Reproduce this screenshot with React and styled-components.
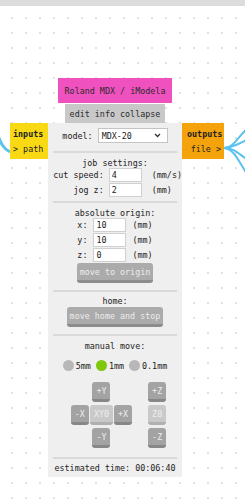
import React, {useState} from 'react';
import styled, {createGlobalStyle} from "styled-components";

const Global = createGlobalStyle`
  html, body {
    margin: 0;
    padding: 0;
  }
  body {
    width: 245px;
    height: 500px;
    overflow: hidden;
    font-family: "DejaVu Sans Mono", "Liberation Mono", monospace;
    font-size: 8.4px;
    color: #222;
    background-color: #fff;
    background-image: radial-gradient(circle, #c4c4c4 0.8px, rgba(255,255,255,0) 1.1px);
    background-size: 14px 15px;
    background-position: 5px 10.5px;
  }
`

const TopBar = styled.div`
  height: 6px;
  background: #dcdcdc;
`

const Canvas = styled.div`
  position: relative;
  height: 494px;
`

const Wires = styled.svg`
  position: absolute;
  left: 0;
  top: 0;
  width: 245px;
  height: 494px;
  pointer-events: none;
`

const Node = styled.div`
  position: absolute;
  left: 10px;
  top: 72px;
  display: grid;
  grid-template-columns: 38px 134px 42px;
  grid-template-rows: auto auto;
  align-items: start;
`

const Header = styled.div`
  grid-column: 2;
  grid-row: 1;
  display: flex;
  flex-direction: column;
  align-items: center;
  gap: 1px;
`

const Title = styled.div`
  width: 114px;
  height: 25px;
  display: flex;
  align-items: center;
  justify-content: center;
  background: #ef52be;
  color: #2a2a2a;
`

const EditBar = styled.div`
  width: 100px;
  height: 19px;
  display: flex;
  align-items: center;
  justify-content: center;
  background: #c8c8c8;
  color: #2a2a2a;
`

const Port = styled.div`
  grid-row: 2;
  grid-column: ${p => p.$right ? 3 : 1};
  height: 36px;
  display: flex;
  flex-direction: column;
  justify-content: center;
  gap: 5px;
  padding: 0 3px 0 ${p => p.$right ? '5px' : '3px'};
  background: ${p => p.$color};
  span { text-align: ${p => p.$right ? 'right' : 'left'}; }
  b { font-weight: bold; }
`

const Panel = styled.div`
  grid-row: 2;
  grid-column: 2;
  background: #efefef;
  padding: 5px 5px 4px;
  display: flex;
  flex-direction: column;
`

const Row = styled.div`
  display: flex;
  justify-content: center;
  align-items: center;
  gap: 5px;
  height: 15px;
`

const SelectBox = styled.div`
  position: relative;
  width: 70px;
  height: 15px;
  box-sizing: border-box;
  border: 1px solid #c4c4c4;
  background: #fff;
  padding-left: 3px;
  display: flex;
  align-items: center;
  svg {
    position: absolute;
    right: 6px;
    top: 4px;
  }
`

const Divider = styled.div`
  height: 2px;
  background: #dadada;
  margin: ${p => p.$m};
`

const Heading = styled.div`
  text-align: center;
  height: 10px;
  line-height: 10px;
  white-space: nowrap;
`

const FieldGrid = styled.div`
  display: grid;
  grid-template-columns: ${p => p.$cols};
  column-gap: ${p => p.$gap || '6px'};
  row-gap: 1px;
  justify-content: center;
  align-items: center;
  white-space: nowrap;
  span.label { text-align: right; }
`

const Field = styled.input`
  width: 33px;
  height: 14px;
  box-sizing: border-box;
  border: 1px solid #d0d0d0;
  background: #fff;
  font: inherit;
  color: #222;
  padding: 0 2px;
  outline: none;
`

const Button = styled.button`
  align-self: center;
  font: inherit;
  white-space: nowrap;
  height: 20px;
  padding: 0 3px;
  border: none;
  border-bottom: 3px solid #8c8c8c;
  border-radius: 3px;
  background: #ababab;
  color: #ececec;
  cursor: pointer;
  margin-top: 1px;
`

const RadioRow = styled.div`
  display: flex;
  justify-content: center;
  align-items: center;
  gap: 5px;
  margin-top: 9px;
  height: 11px;
  white-space: nowrap;
`

const Radio = styled.label`
  display: flex;
  align-items: center;
  gap: 2px;
  &::before {
    content: "";
    width: 11px;
    height: 11px;
    border-radius: 50%;
    background: ${p => p.$on ? '#7ec70d' : '#b8b8b8'};
  }
`

const Jog = styled.div`
  display: grid;
  grid-template-columns: auto auto auto 14px auto;
  grid-template-rows: 20px 20px 20px;
  column-gap: 1px;
  row-gap: 3px;
  justify-content: center;
  justify-items: center;
  margin: 11px 0 0 7px;
`

const JogButton = styled.button`
  font: inherit;
  white-space: nowrap;
  height: 20px;
  min-width: 17px;
  padding: 0 4px;
  border: none;
  border-bottom: 3px solid ${p => p.$light ? '#b0b0b0' : '#878787'};
  border-radius: 3px;
  background: ${p => p.$light ? '#c9c9c9' : '#a3a3a3'};
  color: #eee;
  grid-column: ${p => p.$col};
  grid-row: ${p => p.$row};
`

function App() {
  const [step, setStep] = useState('1mm');

  return (
    <>
      <Global />
      <TopBar />
      <Canvas>
        <Wires viewBox="0 0 245 494">
          <path d="M-10 112 C0 132 0 141 10 146" stroke="#5cc3ee" strokeWidth="3" fill="none" />
          <path d="M224 142 C234 142 238 130 250 120" stroke="#5cc3ee" strokeWidth="2" fill="none" />
          <path d="M224 142 C234 142 240 136 250 133" stroke="#5cc3ee" strokeWidth="2" fill="none" />
          <path d="M224 142 C236 142 240 150 250 155" stroke="#5cc3ee" strokeWidth="2" fill="none" />
          <path d="M224 142 C236 143 240 160 250 172" stroke="#5cc3ee" strokeWidth="2" fill="none" />
        </Wires>
        <Node>
          <Header>
            <Title>Roland MDX / iModela</Title>
            <EditBar>edit info collapse</EditBar>
          </Header>
          <Port $color="#f8d913">
            <b>inputs</b>
            <span>&gt; path</span>
          </Port>
          <Panel>
            <Row>
              <span>model:</span>
              <SelectBox>
                MDX-20
                <svg width="7" height="5" viewBox="0 0 7 5">
                  <path d="M1 1 L3.5 3.5 L6 1" stroke="#333" strokeWidth="1.3" fill="none" />
                </svg>
              </SelectBox>
            </Row>
            <Divider $m="8px 0 5px" />
            <Heading>job settings:</Heading>
            <FieldGrid $cols="auto 33px 30px" $gap="5px">
              <span className="label">cut speed:</span>
              <Field defaultValue="4" />
              <span>&nbsp;(mm/s)</span>
              <span className="label">jog z:</span>
              <Field defaultValue="2" />
              <span>&nbsp;(mm)</span>
            </FieldGrid>
            <Divider $m="4px 0 5px" />
            <Heading>absolute origin:</Heading>
            <FieldGrid $cols="auto 33px auto" $gap="6px">
              <span className="label">x:</span>
              <Field defaultValue="10" />
              <span>(mm)</span>
              <span className="label">y:</span>
              <Field defaultValue="10" />
              <span>(mm)</span>
              <span className="label">z:</span>
              <Field defaultValue="0" />
              <span>(mm)</span>
            </FieldGrid>
            <Button>move to origin</Button>
            <Divider $m="7px 0 4px" />
            <Heading>home:</Heading>
            <Button>move home and stop</Button>
            <Divider $m="7px 0 5px" />
            <Heading>manual move:</Heading>
            <RadioRow>
              {['5mm', '1mm', '0.1mm'].map(s => (
                <Radio key={s} $on={step === s} onClick={() => setStep(s)}>{s}</Radio>
              ))}
            </RadioRow>
            <Jog>
              <JogButton $col={2} $row={1}>+Y</JogButton>
              <JogButton $col={1} $row={2}>-X</JogButton>
              <JogButton $col={2} $row={2} $light>XY0</JogButton>
              <JogButton $col={3} $row={2}>+X</JogButton>
              <JogButton $col={2} $row={3}>-Y</JogButton>
              <JogButton $col={5} $row={1}>+Z</JogButton>
              <JogButton $col={5} $row={2} $light>Z0</JogButton>
              <JogButton $col={5} $row={3}>-Z</JogButton>
            </Jog>
            <Divider $m="9px 0 4px" />
            <Heading>estimated time: 00:06:40</Heading>
          </Panel>
          <Port $color="#f5a30c" $right>
            <b>outputs</b>
            <span>file &gt;</span>
          </Port>
        </Node>
      </Canvas>
    </>
  );
}

export default App;
